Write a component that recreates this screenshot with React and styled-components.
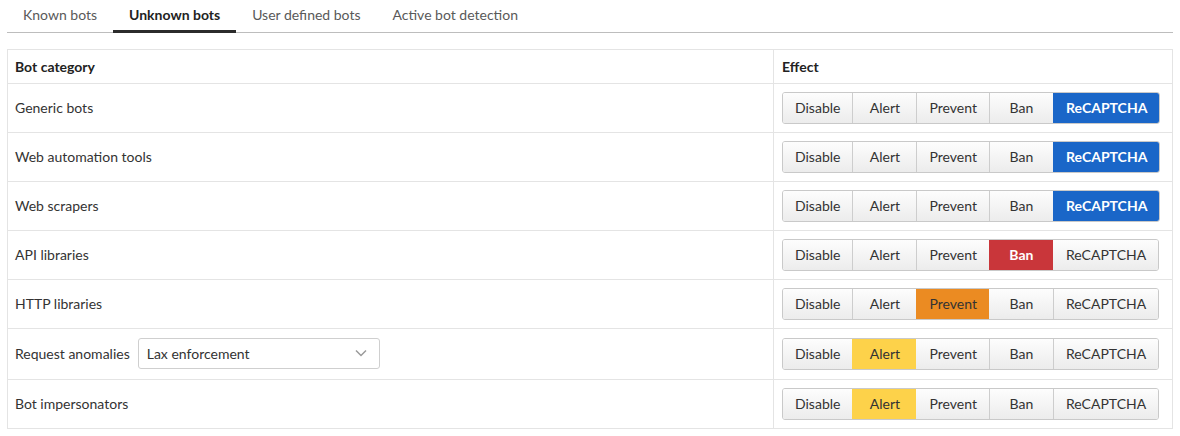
import React, { useState } from "react";
import styled, { createGlobalStyle, css } from "styled-components";

const GlobalStyle = createGlobalStyle`
  body {
    margin: 0;
    background: #fff;
    font-family: Lato, "Open Sans", sans-serif;
    font-size: 14px;
    color: #333;
  }
`;

const Page = styled.div`
  padding: 0 7px;
`;

// Tabs
const Tabs = styled.div`
  display: flex;
  border-bottom: 1px solid #bdbdbd;
`;

const Tab = styled.div`
  padding: 6px 16px 7px;
  line-height: 17px;
  margin-bottom: -1px;
  border-bottom: 3px solid ${({ $active }) => ($active ? "#2b2b2b" : "transparent")};
  color: ${({ $active }) => ($active ? "#222" : "#595959")};
  font-weight: ${({ $active }) => ($active ? 700 : 400)};
  cursor: pointer;
`;

// Table
const Table = styled.div`
  margin-top: 16px;
  border: 1px solid #e4e4e4;
`;

const Row = styled.div`
  display: grid;
  grid-template-columns: 765px 1fr;
  border-top: ${({ $first }) => ($first ? "none" : "1px solid #e4e4e4")};
`;

const Cell = styled.div`
  display: flex;
  align-items: center;
  gap: 8px;
  padding: ${({ $head }) => ($head ? "8px 8px 8px 7px" : "7px 8px 9px 7px")};
  min-height: ${({ $head }) => ($head ? "17px" : "32px")};
  font-weight: ${({ $head }) => ($head ? 700 : 400)};
  color: ${({ $head }) => ($head ? "#222" : "#333")};
  & + & {
    border-left: 1px solid #e4e4e4;
    padding: 8px 8px 8px 8px;
  }
`;

const Select = styled.div`
  display: flex;
  align-items: center;
  justify-content: space-between;
  box-sizing: border-box;
  width: 242px;
  height: 31px;
  margin: 2px 0 1px;
  padding: 0 12px 1px 8px;
  border: 1px solid #cfcfcf;
  border-radius: 3px;
  background: #fff;
  color: #333;
`;

// Effect buttons
const Group = styled.div`
  display: inline-flex;
  height: 32px;
  border: 1px solid #c9c9c9;
  border-radius: 3px;
  overflow: hidden;
  box-sizing: border-box;
`;

const activeColors = {
  blue: css`background: #1a66c8; color: #fff; font-weight: 700;`,
  red: css`background: #c9363a; color: #fff; font-weight: 700;`,
  orange: css`background: #eb8b22; color: #333;`,
  yellow: css`background: #fdd24a; color: #333;`,
};

const Btn = styled.button`
  font-family: inherit;
  font-size: 14px;
  min-width: 64px;
  padding: 0 12px 2px;
  border: none;
  border-left: 1px solid #cdcdcd;
  background: linear-gradient(#fdfdfd, #ececec);
  color: #333;
  cursor: pointer;
  &:first-child {
    border-left: none;
  }
  ${({ $tone }) => $tone && activeColors[$tone]}
  ${({ $tone }) => $tone && css`border-left-color: transparent;`}
  ${({ $tone }) => $tone && css`& + button { border-left-color: transparent; }`}
`;

const EFFECTS = ["Disable", "Alert", "Prevent", "Ban", "ReCAPTCHA"];
const TONES = { Alert: "yellow", Prevent: "orange", Ban: "red", ReCAPTCHA: "blue" };

const ROWS = [
  { name: "Generic bots", effect: "ReCAPTCHA" },
  { name: "Web automation tools", effect: "ReCAPTCHA" },
  { name: "Web scrapers", effect: "ReCAPTCHA" },
  { name: "API libraries", effect: "Ban" },
  { name: "HTTP libraries", effect: "Prevent" },
  { name: "Request anomalies", effect: "Alert", select: "Lax enforcement" },
  { name: "Bot impersonators", effect: "Alert" },
];

const Chevron = () => (
  <svg width="12" height="8" viewBox="0 0 12 8" fill="none">
    <path d="M1 1.5l5 5 5-5" stroke="#9a9a9a" strokeWidth="1.5" />
  </svg>
);

const EffectGroup = ({ value, onChange }) => (
  <Group>
    {EFFECTS.map((e) => (
      <Btn key={e} $tone={value === e ? TONES[e] : null} onClick={() => onChange(e)}>
        {e}
      </Btn>
    ))}
  </Group>
);

export default function App() {
  const [rows, setRows] = useState(ROWS);
  const setEffect = (i, effect) =>
    setRows((r) => r.map((row, j) => (j === i ? { ...row, effect } : row)));

  return (
    <Page>
      <GlobalStyle />
      <Tabs>
        <Tab>Known bots</Tab>
        <Tab $active>Unknown bots</Tab>
        <Tab>User defined bots</Tab>
        <Tab>Active bot detection</Tab>
      </Tabs>

      <Table>
        <Row $first>
          <Cell $head>Bot category</Cell>
          <Cell $head>Effect</Cell>
        </Row>
        {rows.map((row, i) => (
          <Row key={row.name}>
            <Cell>
              {row.name}
              {row.select ? (
                <Select>
                  {row.select}
                  <Chevron />
                </Select>
              ) : null}
            </Cell>
            <Cell>
              <EffectGroup value={row.effect} onChange={(e) => setEffect(i, e)} />
            </Cell>
          </Row>
        ))}
      </Table>
    </Page>
  );
}
